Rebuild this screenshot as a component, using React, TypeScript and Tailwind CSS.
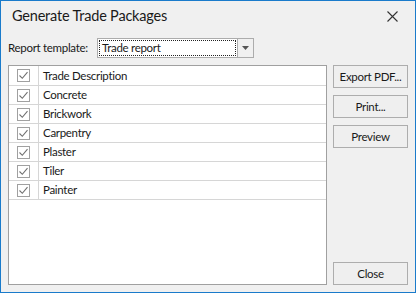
import React from "react";

const rows = ["Concrete", "Brickwork", "Carpentry", "Plaster", "Tiler", "Painter"];

function Check() {
  return (
    <div className="w-[13px] h-[13px] border border-[#a0a0a0] bg-white flex items-center justify-center">
      <svg width="11" height="11" viewBox="0 0 11 11">
        <path d="M1.5 5.5 L4.3 8.3 L9.5 2.2" fill="none" stroke="#707070" strokeWidth="1.1" />
      </svg>
    </div>
  );
}

function Btn({ label, className = "" }: { label: string; className?: string }) {
  return (
    <div
      className={
        "h-[23px] w-[75px] border border-[#adadad] bg-[#efefef] flex items-center justify-center text-[11.5px] tracking-[-0.3px] text-[#1a1a1a] whitespace-nowrap " +
        className
      }
    >
      {label}
    </div>
  );
}

export default function App() {
  return (
    <div
      className="w-[416px] h-[293px] border border-[#1a7bcb] bg-[#f0f0f0] flex flex-col text-[#1a1a1a]"
      style={{ fontFamily: 'Lato, "Noto Sans", sans-serif' }}
    >
      <div className="h-[30px] flex items-center justify-between pl-[11px] pr-[17px]">
        <span className="text-[14.5px] tracking-[-0.2px] leading-none whitespace-nowrap">Generate Trade Packages</span>
        <svg width="11" height="11" viewBox="0 0 11 11">
          <path d="M0.5 0.5 L10.5 10.5 M10.5 0.5 L0.5 10.5" stroke="#333" strokeWidth="1.1" />
        </svg>
      </div>
      <div className="mt-[7px] h-[20px] flex items-center pl-[7px] text-[11.5px] tracking-[-0.3px]">
        <div className="w-[89px] whitespace-nowrap">Report template:</div>
        <div className="w-[157px] h-[20px] border border-[#acacac] flex">
          <div className="flex-1 bg-white p-px">
            <div className="h-full border border-dotted border-[#222] flex items-center pl-[2px] whitespace-nowrap">
              Trade report
            </div>
          </div>
          <div className="w-[16px] border-l border-[#acacac] flex items-center justify-center bg-[#f0f0f0]">
            <svg width="7" height="4" viewBox="0 0 7 4">
              <path d="M0 0 L7 0 L3.5 4 Z" fill="#555" />
            </svg>
          </div>
        </div>
      </div>
      <div className="mt-[7px] flex-1 flex px-[7px] pb-[7px] text-[11.5px] tracking-[-0.3px]">
        <div className="w-[319px] border border-[#a0a0a0] bg-white flex flex-col">
          <div className="h-[20px] flex border-b border-[#d6d6d6]">
            <div className="w-[30px] border-r border-[#d6d6d6] flex items-center justify-center">
              <Check />
            </div>
            <div className="flex-1 flex items-center pl-[4px] whitespace-nowrap">Trade Description</div>
          </div>
          {rows.map((r) => (
            <div key={r} className="h-[19px] flex border-b border-[#d6d6d6]">
              <div className="w-[30px] border-r border-[#d6d6d6] flex items-center justify-center">
                <Check />
              </div>
              <div className="flex-1 flex items-center pl-[4px]">{r}</div>
            </div>
          ))}
        </div>
        <div className="ml-[6px] w-[75px] flex flex-col gap-[7px]">
          <Btn label="Export PDF..." />
          <Btn label="Print..." />
          <Btn label="Preview" />
          <Btn label="Close" className="mt-auto" />
        </div>
      </div>
    </div>
  );
}
